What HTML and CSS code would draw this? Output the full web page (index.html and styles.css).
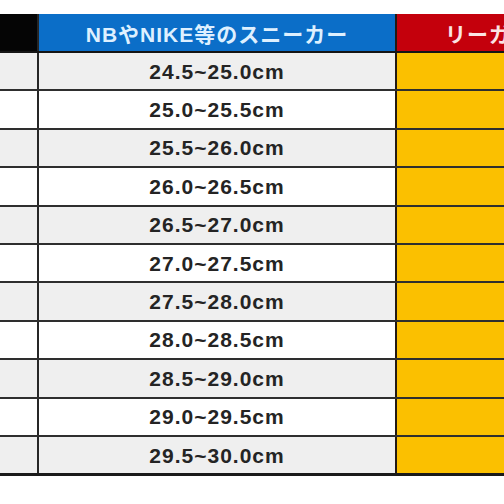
FILE: index.html
```html
<!DOCTYPE html>
<html lang="ja">
<head>
<meta charset="utf-8">
<link rel="stylesheet" href="styles.css">
</head>
<body>
<div class="sheet">
  <div class="row head">
    <div class="cell c1 black"></div>
    <div class="cell c2 blue">NBやNIKE等のスニーカー</div>
    <div class="cell c3 red">リーガル</div>
  </div>
  <div class="row gray"><div class="cell c1"></div><div class="cell c2">24.5~25.0cm</div><div class="cell c3 yellow"></div></div>
  <div class="row"><div class="cell c1"></div><div class="cell c2">25.0~25.5cm</div><div class="cell c3 yellow"></div></div>
  <div class="row gray"><div class="cell c1"></div><div class="cell c2">25.5~26.0cm</div><div class="cell c3 yellow"></div></div>
  <div class="row"><div class="cell c1"></div><div class="cell c2">26.0~26.5cm</div><div class="cell c3 yellow"></div></div>
  <div class="row gray"><div class="cell c1"></div><div class="cell c2">26.5~27.0cm</div><div class="cell c3 yellow"></div></div>
  <div class="row"><div class="cell c1"></div><div class="cell c2">27.0~27.5cm</div><div class="cell c3 yellow"></div></div>
  <div class="row gray"><div class="cell c1"></div><div class="cell c2">27.5~28.0cm</div><div class="cell c3 yellow"></div></div>
  <div class="row"><div class="cell c1"></div><div class="cell c2">28.0~28.5cm</div><div class="cell c3 yellow"></div></div>
  <div class="row gray"><div class="cell c1"></div><div class="cell c2">28.5~29.0cm</div><div class="cell c3 yellow"></div></div>
  <div class="row"><div class="cell c1"></div><div class="cell c2">29.0~29.5cm</div><div class="cell c3 yellow"></div></div>
  <div class="row gray last"><div class="cell c1"></div><div class="cell c2">29.5~30.0cm</div><div class="cell c3 yellow"></div></div>
</div>
</body>
</html>
```
FILE: styles.css
```css
html, body {
  margin: 0;
  padding: 0;
  background: #ffffff;
  width: 504px;
  height: 504px;
  overflow: hidden;
}
.sheet {
  margin-top: 14px;
  width: 600px;
  display: flex;
  flex-direction: column;
  font-family: "Liberation Sans", "Noto Sans CJK JP", sans-serif;
  font-weight: bold;
}
.row {
  display: flex;
  height: 38.4px;
  box-sizing: border-box;
  border-bottom: 2px solid #2e2e2e;
  background: #ffffff;
}
.row.gray {
  background: #efefef;
}
.row.head {
  height: 39px;
  border-bottom: 2px solid #151515;
}
.row.last {
  height: 39.4px;
  border-bottom: 3px solid #1a1a1a;
}
.cell {
  box-sizing: border-box;
  display: flex;
  align-items: center;
  justify-content: center;
  white-space: nowrap;
}
.c1 {
  width: 39px;
  border-right: 2px solid #262626;
}
.c2 {
  width: 358px;
  border-right: 2px solid #231a14;
  font-size: 21px;
  letter-spacing: 1px;
  color: #242424;
  padding-top: 1px;
}
.c3 {
  width: 184px;
}
.black {
  background: #050505;
}
.blue {
  background: #0b6ec8;
  color: #def0ff;
  font-size: 21px;
  letter-spacing: 1px;
}
.red {
  background: #c4000c;
  color: #fbe4e4;
  font-size: 21px;
  letter-spacing: 1px;
}
.yellow {
  background: #fbc000;
}
```
